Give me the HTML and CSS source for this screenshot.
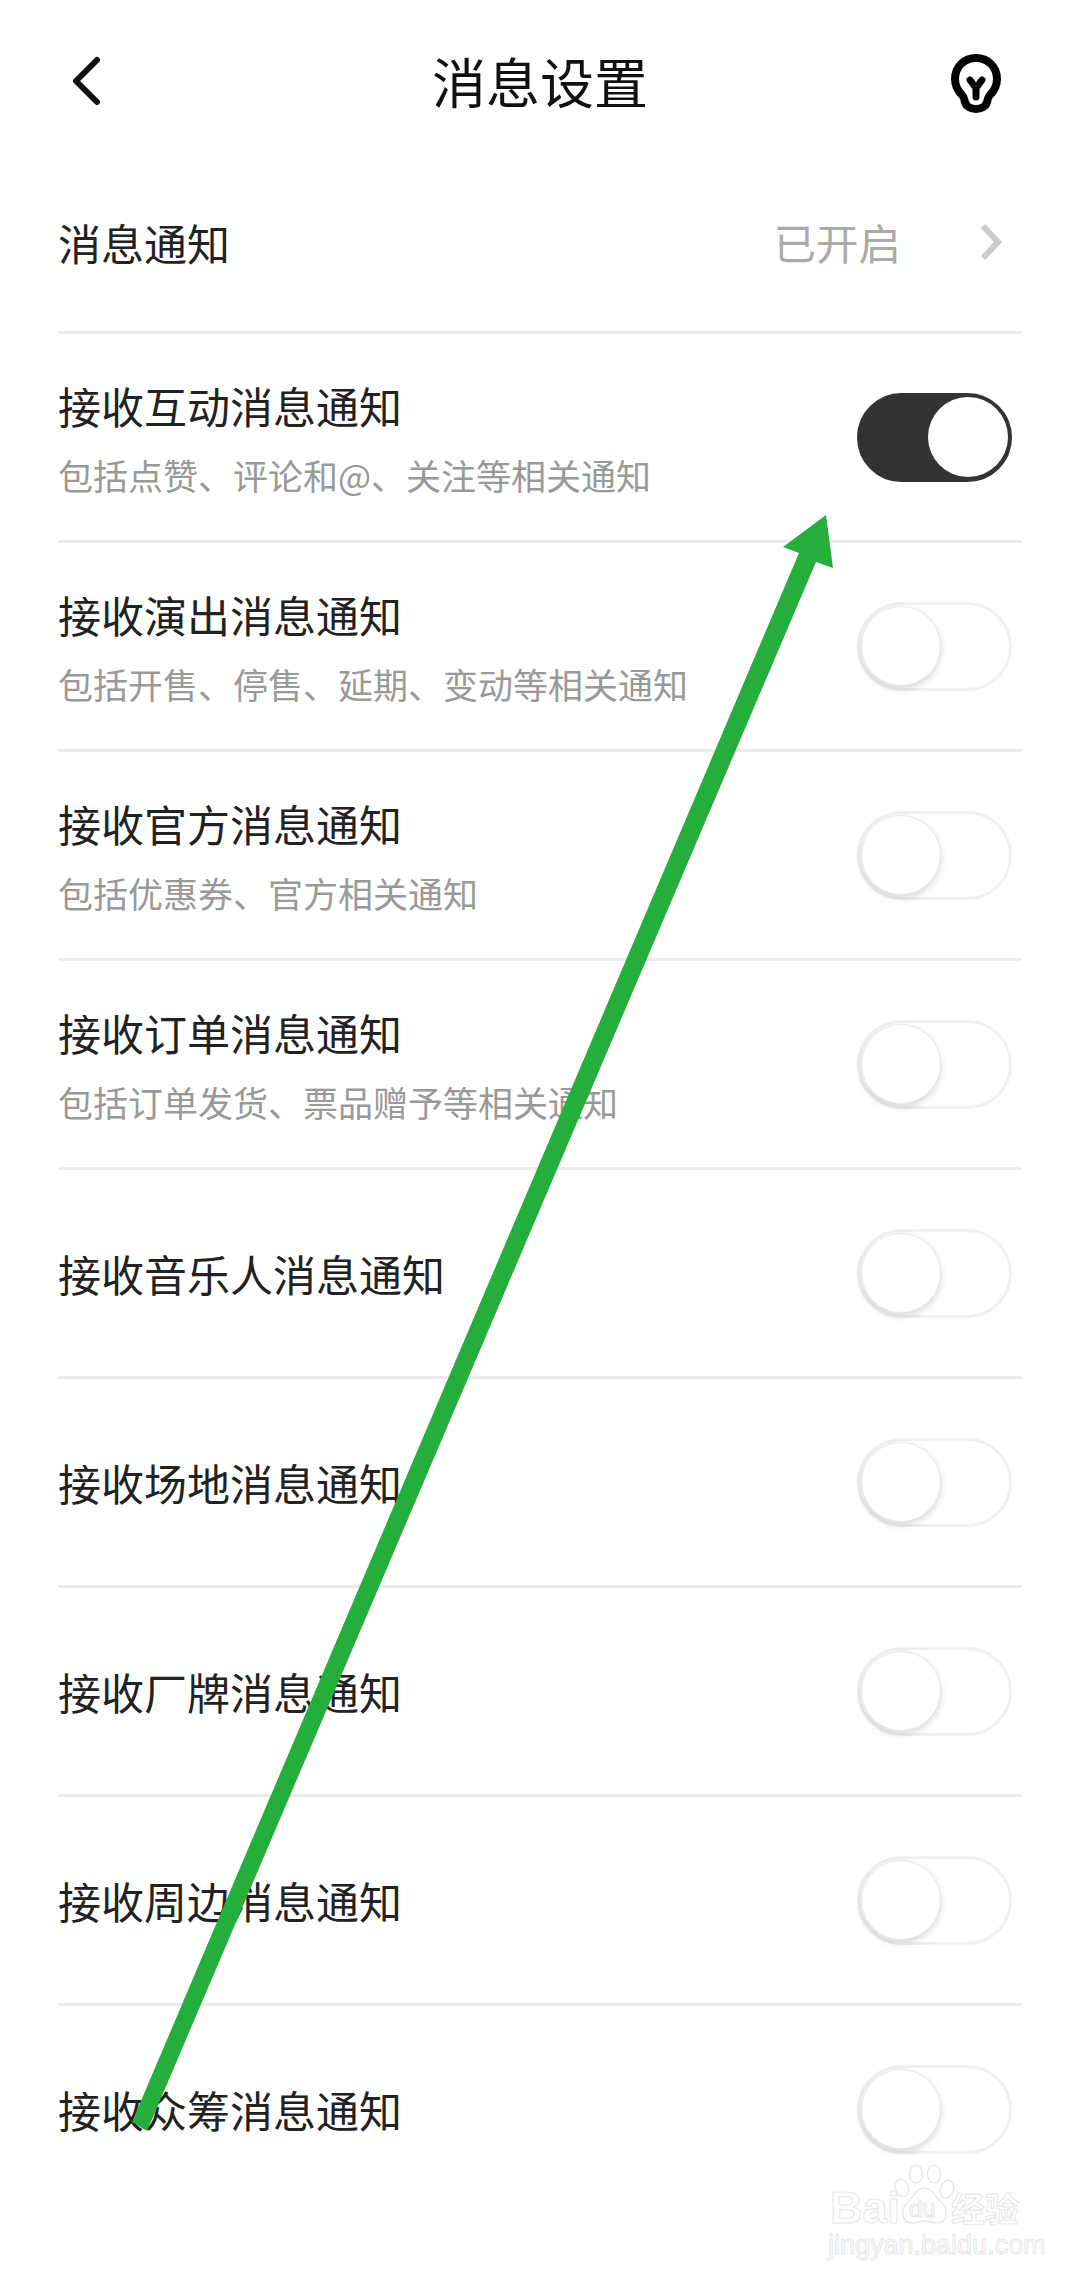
FILE: index.html
```html
<!DOCTYPE html>
<html>
<head>
  <meta charset="utf-8">
  <title>消息设置</title>
  <link rel="stylesheet" href="styles.css">
</head>
<body>
<div id="page">

  <div class="top_bar">
    <svg class="back_icon" viewBox="0 0 36 60" width="36" height="60">
      <polyline points="25,9 4,30 25,51" fill="none" stroke="#111" stroke-width="6" stroke-linecap="round" stroke-linejoin="round"/>
    </svg>
    <h1 class="page_title">消息设置</h1>
    <svg class="bulb_icon" viewBox="0 0 60 70" width="60" height="70">
      <path d="M30 7C18 7 9 16 9 28C9 35 12 40 16 44C19 47 18 49 19 51C20 55 24 58 30 58C36 58 40 55 41 51C42 49 41 47 44 44C48 40 51 35 51 28C51 16 42 7 30 7Z" fill="none" stroke="#000" stroke-width="8"/>
      <path d="M24 29L30 37L36 29M30 37V46" fill="none" stroke="#000" stroke-width="7" stroke-linecap="round" stroke-linejoin="round"/>
    </svg>
  </div>

  <div class="settings_list">

    <div class="row row_first">
      <div class="row_title">消息通知</div>
      <div class="row_value">已开启</div>
      <svg class="more_icon" viewBox="0 0 30 44" width="30" height="44">
        <polyline points="3,6 18,22 3,38" fill="none" stroke="#ccc" stroke-width="6"/>
      </svg>
    </div>

    <div class="row">
      <div class="row_text">
        <div class="row_title">接收互动消息通知</div>
        <div class="row_sub">包括点赞、评论和@、关注等相关通知</div>
      </div>
      <div class="switch on"><span class="knob"></span></div>
    </div>

    <div class="row">
      <div class="row_text">
        <div class="row_title">接收演出消息通知</div>
        <div class="row_sub">包括开售、停售、延期、变动等相关通知</div>
      </div>
      <div class="switch"><span class="knob"></span></div>
    </div>

    <div class="row">
      <div class="row_text">
        <div class="row_title">接收官方消息通知</div>
        <div class="row_sub">包括优惠券、官方相关通知</div>
      </div>
      <div class="switch"><span class="knob"></span></div>
    </div>

    <div class="row">
      <div class="row_text">
        <div class="row_title">接收订单消息通知</div>
        <div class="row_sub">包括订单发货、票品赠予等相关通知</div>
      </div>
      <div class="switch"><span class="knob"></span></div>
    </div>

    <div class="row">
      <div class="row_title">接收音乐人消息通知</div>
      <div class="switch"><span class="knob"></span></div>
    </div>

    <div class="row">
      <div class="row_title">接收场地消息通知</div>
      <div class="switch"><span class="knob"></span></div>
    </div>

    <div class="row">
      <div class="row_title">接收厂牌消息通知</div>
      <div class="switch"><span class="knob"></span></div>
    </div>

    <div class="row">
      <div class="row_title">接收周边消息通知</div>
      <div class="switch"><span class="knob"></span></div>
    </div>

    <div class="row row_last">
      <div class="row_title">接收众筹消息通知</div>
      <div class="switch"><span class="knob"></span></div>
    </div>

  </div>

  <!-- annotation drawn over the screenshot -->
  <svg class="arrow" viewBox="0 0 1080 2278" width="1080" height="2278">
    <polygon points="826,515 783,547 799,553 132,2122 147,2131 816,562 833,568" fill="#25ae3c"/>
  </svg>

  <div class="watermark">
    <div class="wm_logo">
      <span class="wm_bai">Bai</span>
      <svg class="wm_paw" viewBox="0 0 66 62" width="66" height="62">
        <g fill="#fff" stroke="#e8e8e8" stroke-width="1.5">
          <ellipse cx="11" cy="24" rx="6.5" ry="9" transform="rotate(-20 11 24)"/>
          <ellipse cx="25" cy="10" rx="6.5" ry="9"/>
          <ellipse cx="43" cy="10" rx="6.5" ry="9"/>
          <ellipse cx="56" cy="25" rx="6.5" ry="9" transform="rotate(20 56 25)"/>
          <path d="M33 24C25 24 23 33 17 38C9 45 10 59 22 59C27 59 29 57 33 57C37 57 40 59 46 59C57 59 58 45 50 38C44 33 41 24 33 24Z"/>
        </g>
      </svg>
      <span class="wm_du">du</span>
      <span class="wm_jy">经验</span>
    </div>
    <div class="wm_url">jingyan.baidu.com</div>
  </div>

</div>
</body>
</html>
```

FILE: styles.css
```css
html, body {
  height: 100%;
  margin: 0;
}
body {
  background-color: #fff;
  font-family: "Noto Sans CJK SC", "Noto Sans", sans-serif;
  overflow: hidden;
}

#page {
  position: relative;
  width: 1080px;
  height: 2278px;
  overflow: hidden;
}

.top_bar {
  display: grid;
  grid-template-columns: 1fr auto 1fr;
  align-items: center;
  height: 168px;
  padding: 0 72px;
}
.back_icon {
  margin-bottom: 6px;
}
.page_title {
  margin: 0 0 6px;
  font-weight: normal;
  font-size: 54px;
  line-height: 60px;
  color: #111;
}
.bulb_icon {
  justify-self: end;
  margin: 3px 2px 0 0;
}

.settings_list {
  margin: 0 58px;
}

.row {
  display: flex;
  align-items: center;
  justify-content: space-between;
  height: 206px;
  padding-right: 10px;
  border-bottom: 3px solid #ebebeb;
}
.row_first {
  justify-content: flex-start;
  height: 148px;
  padding-bottom: 15px;
}
.row_last {
  border-bottom: none;
}

.row_text {
  padding-top: 2px;
}
.row_title {
  font-size: 43px;
  line-height: 50px;
  color: #222;
}
.row_sub {
  margin-top: 23px;
  font-size: 35px;
  line-height: 44px;
  color: #999;
}
.row_value {
  margin-left: auto;
  font-size: 42.5px;
  line-height: 50px;
  color: #aaa;
}
.more_icon {
  margin: 0 2px 0 79px;
}

.switch {
  display: flex;
  align-items: center;
  box-sizing: border-box;
  width: 155px;
  height: 89px;
  padding: 0 1px;
  border: 3px solid #f0f0f2;
  border-radius: 45px;
  background: #fff;
}
.switch.on {
  justify-content: flex-end;
  border-color: #333;
  background: #333;
}
.knob {
  box-sizing: border-box;
  width: 80px;
  height: 80px;
  border-radius: 50%;
  background: #fff;
  border: 1px solid #e8e8e8;
  box-shadow: 0 3px 7px rgba(0, 0, 0, 0.16);
}
.switch.on .knob {
  border: none;
  box-shadow: none;
}

.arrow {
  position: absolute;
  left: 0;
  top: 0;
}

.watermark {
  position: absolute;
  left: 828px;
  top: 2162px;
  width: 196px;
}
.wm_logo {
  position: relative;
  height: 68px;
}
.wm_bai, .wm_du, .wm_jy, .wm_url {
  position: absolute;
  color: #fff;
  -webkit-text-stroke: 1px #e6e6e6;
  font-family: "Liberation Sans", sans-serif;
}
.wm_bai {
  left: 2px;
  top: 21px;
  font-size: 45px;
  line-height: 50px;
  font-weight: bold;
}
.wm_paw {
  position: absolute;
  left: 63px;
  top: 2px;
}
.wm_du {
  left: 81px;
  top: 33px;
  font-size: 24px;
  line-height: 28px;
}
.wm_jy {
  left: 123px;
  top: 26px;
  font-family: "Noto Sans CJK SC", sans-serif;
  font-size: 34px;
  line-height: 40px;
  font-weight: bold;
}
.wm_url {
  left: 0;
  top: 68px;
  font-size: 27px;
  line-height: 30px;
  white-space: nowrap;
}
```
